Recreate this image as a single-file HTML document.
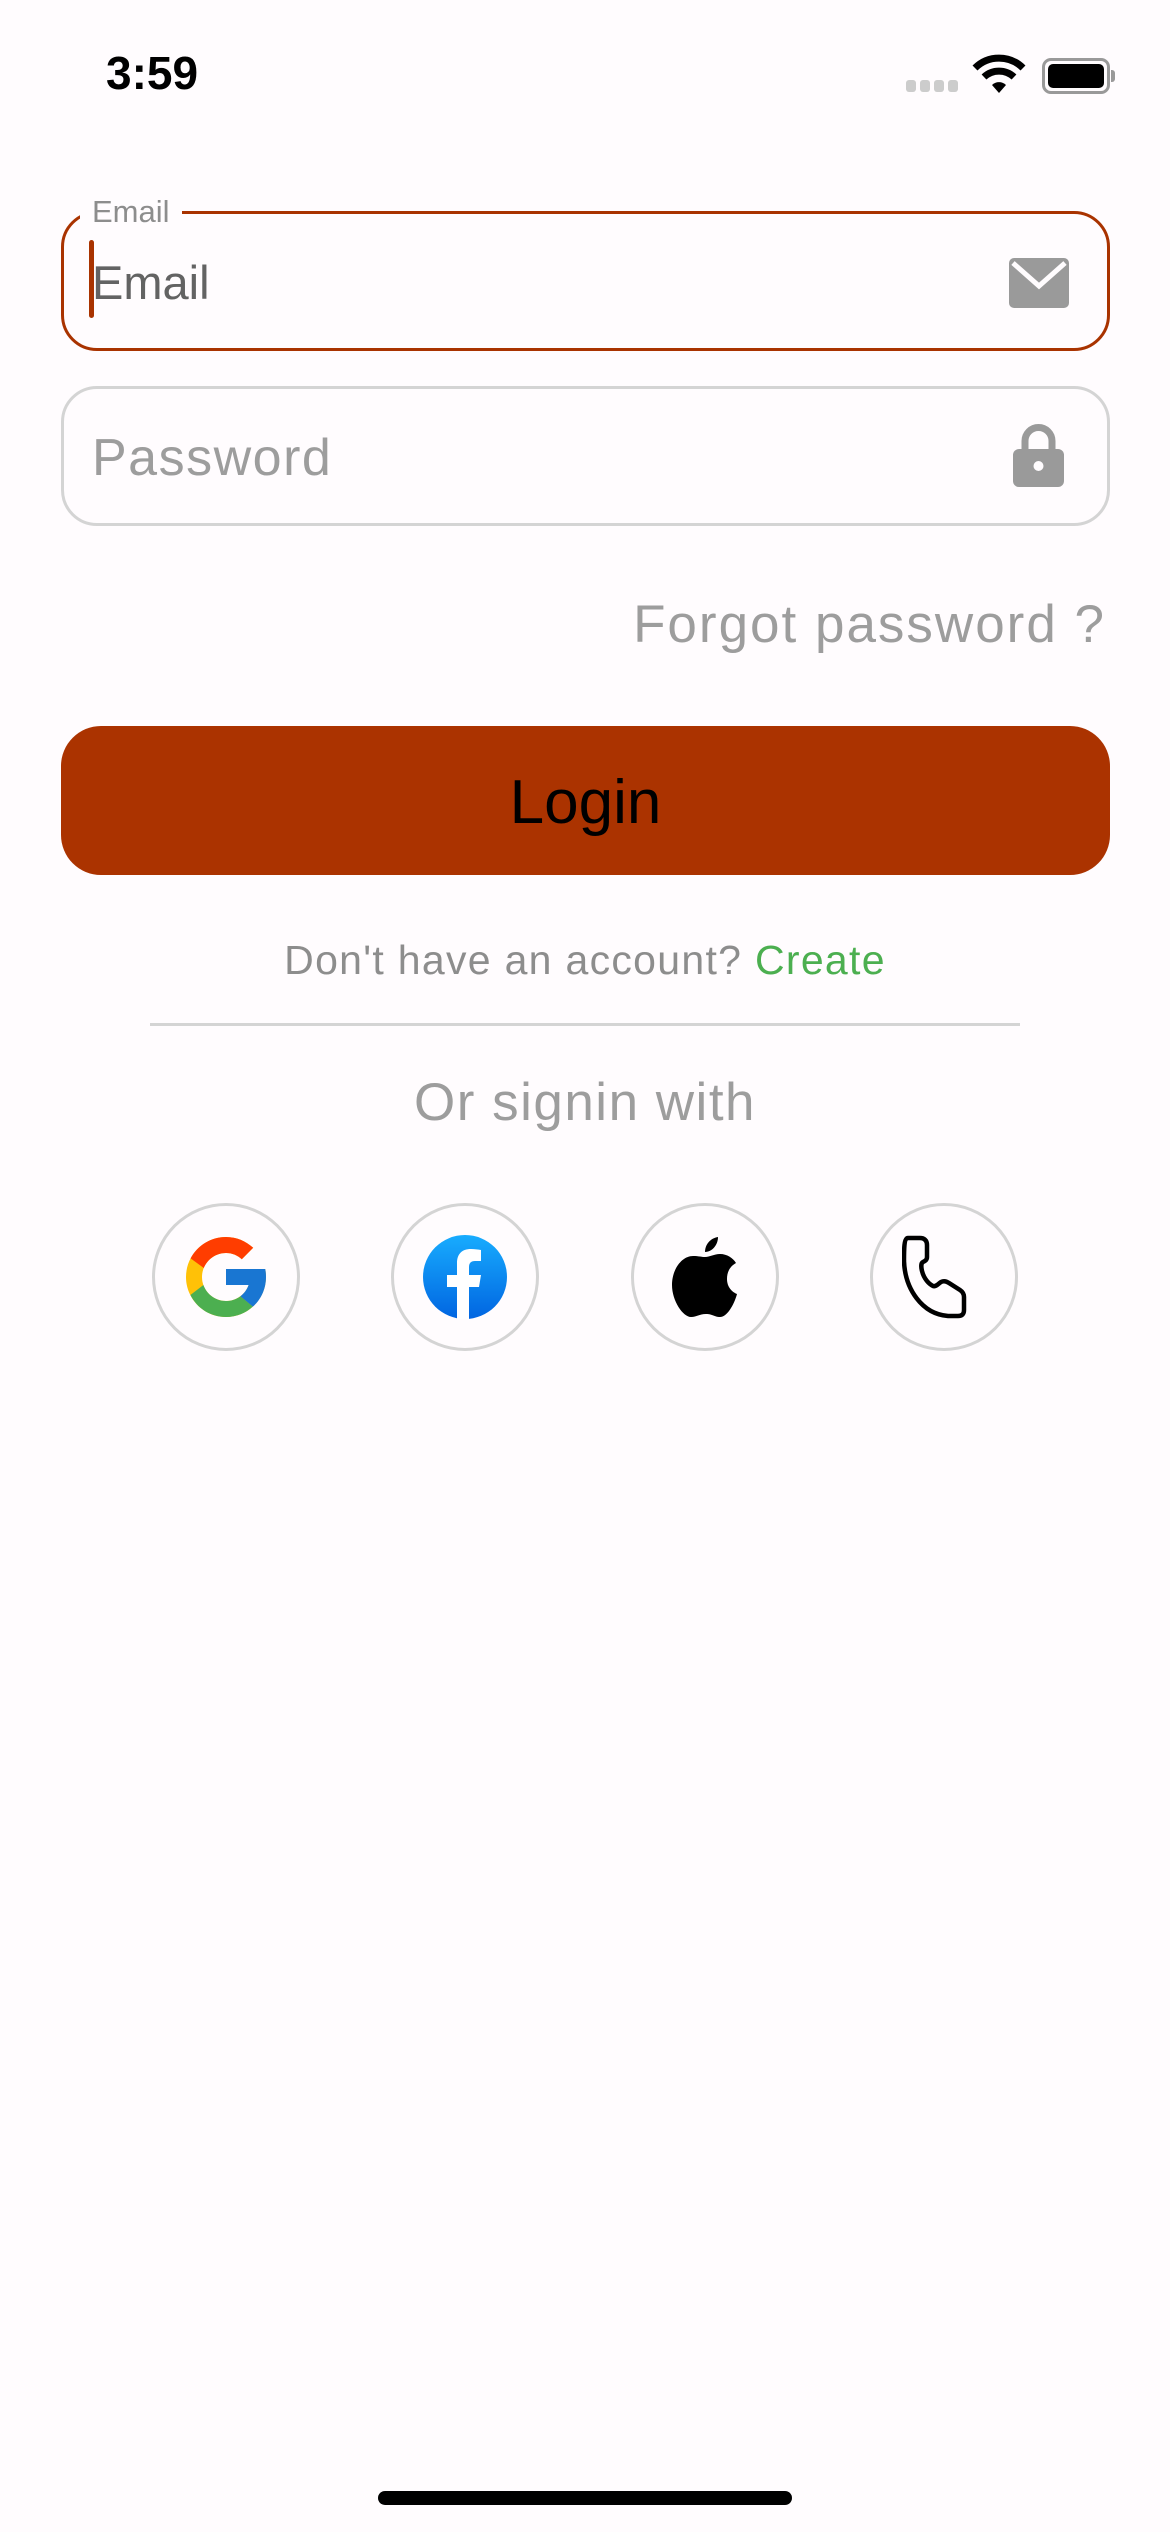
<!DOCTYPE html>
<html><head><meta charset="utf-8"><style>
*{margin:0;padding:0;box-sizing:border-box}
body{width:1170px;height:2532px;background:#fffcfe;font-family:"Liberation Sans",sans-serif;position:relative;overflow:hidden}
.a{position:absolute}
.field{position:absolute;left:61px;width:1049px;height:140px;border-radius:36px}
</style></head><body>
<div class="a" style="left:106px;top:46px;font-size:46px;font-weight:bold;color:#000">3:59</div>
<div class="a" style="left:906px;top:80px;width:52px;height:12px;display:flex;gap:4px">
<div style="flex:1;background:#ccc;border-radius:3px"></div><div style="flex:1;background:#ccc;border-radius:3px"></div><div style="flex:1;background:#ccc;border-radius:3px"></div><div style="flex:1;background:#ccc;border-radius:3px"></div></div>
<svg class="a" style="left:972px;top:54px" width="54" height="40" viewBox="0 0 54 40"><path d="M3 14 A34 34 0 0 1 51 14" stroke="#000" stroke-width="7" fill="none"/><path d="M12 23 A22 22 0 0 1 42 23" stroke="#000" stroke-width="7" fill="none"/><path d="M20 31 L27 39 L34 31 A10 10 0 0 0 20 31Z" fill="#000"/></svg>
<div class="a" style="left:1042px;top:58px;width:68px;height:36px;border:3px solid #999;border-radius:9px;padding:3px"><div style="width:100%;height:100%;background:#000;border-radius:5px"></div></div>
<div class="a" style="left:1111px;top:70px;width:4px;height:12px;background:#999;border-radius:0 3px 3px 0"></div>

<div class="field" style="top:211px;border:3px solid #a93300"></div>
<div class="a" style="left:80px;top:194px;padding:0 12px;background:#fffcfe;font-size:31px;color:#8d8d8d">Email</div>
<div class="a" style="left:89px;top:240px;width:5px;height:78px;background:#a93300;border-radius:3px"></div>
<div class="a" style="left:92px;top:255px;font-size:47px;color:#636363">Email</div>
<svg class="a" style="left:1009px;top:258px" width="60" height="50" viewBox="0 0 60 50"><rect width="60" height="50" rx="5" fill="#9a9a9a"/><path d="M4 5 L30 28 L56 5" stroke="#fffcfe" stroke-width="5" fill="none"/></svg>

<div class="field" style="top:386px;border:3px solid #d4d4d4"></div>
<div class="a" style="left:92px;top:428px;font-size:52px;color:#9d9d9d;letter-spacing:1.5px">Password</div>
<svg class="a" style="left:1013px;top:423px" width="51" height="64" viewBox="0 0 51 64"><path d="M12 28 V18 A13.5 13.5 0 0 1 39 18 V28" stroke="#9a9a9a" stroke-width="7" fill="none"/><rect x="0" y="26" width="51" height="38" rx="6" fill="#9a9a9a"/><circle cx="25.5" cy="43" r="5" fill="#fffcfe"/></svg>

<div class="a" style="right:64px;top:594px;font-size:53px;color:#9d9d9d;letter-spacing:2px">Forgot password ?</div>

<div class="a" style="left:61px;top:726px;width:1049px;height:149px;background:#ab3300;border-radius:40px;text-align:center;line-height:153px;font-size:62px;color:#000">Login</div>

<div class="a" style="left:0;width:1170px;top:937px;text-align:center;font-size:41px;color:#8d8d8d;letter-spacing:1.3px">Don't have an account? <span style="color:#4caf50">Create</span></div>
<div class="a" style="left:150px;top:1023px;width:870px;height:3px;background:#d4d4d4"></div>
<div class="a" style="left:0;width:1170px;top:1072px;text-align:center;font-size:53px;color:#9d9d9d;letter-spacing:1.5px">Or signin with</div>

<div class="a" style="left:152px;top:1203px;width:148px;height:148px;border:3px solid #d4d4d4;border-radius:50%"></div>
<div class="a" style="left:391px;top:1203px;width:148px;height:148px;border:3px solid #d4d4d4;border-radius:50%"></div>
<div class="a" style="left:631px;top:1203px;width:148px;height:148px;border:3px solid #d4d4d4;border-radius:50%"></div>
<div class="a" style="left:870px;top:1203px;width:148px;height:148px;border:3px solid #d4d4d4;border-radius:50%"></div>

<svg class="a" style="left:178px;top:1229px" width="96" height="96" viewBox="0 0 48 48"><path fill="#FFC107" d="M43.6 20H24v8h11.3C33.7 32.7 29.2 36 24 36c-6.6 0-12-5.4-12-12s5.4-12 12-12c3.1 0 5.8 1.2 7.9 3.1l5.7-5.7C34 6.1 29.3 4 24 4 13 4 4 13 4 24s9 20 20 20 20-9 20-20c0-1.3-.1-2.7-.4-4z"/><path fill="#FF3D00" d="M6.3 14.7l6.6 4.8C14.7 15.1 19 12 24 12c3.1 0 5.8 1.2 7.9 3.1l5.7-5.7C34 6.1 29.3 4 24 4 16.3 4 9.7 8.3 6.3 14.7z"/><path fill="#4CAF50" d="M24 44c5.200 0 9.9-2 13.4-5.2l-6.2-5.2C29.2 35.1 26.7 36 24 36c-5.2 0-9.6-3.3-11.3-8l-6.5 5C9.5 39.6 16.2 44 24 44z"/><path fill="#1976D2" d="M43.6 20H24v8h11.3c-.8 2.2-2.2 4.2-4.1 5.6l6.2 5.2C37 39.2 44 34 44 24c0-1.3-.1-2.7-.4-4z"/></svg>
<svg class="a" style="left:423px;top:1235px" width="84" height="84" viewBox="0 0 84 84"><defs><linearGradient id="fb" x1="0" y1="0" x2="0" y2="1"><stop offset="0" stop-color="#18acfe"/><stop offset="1" stop-color="#0165e1"/></linearGradient></defs><circle cx="42" cy="42" r="42" fill="url(#fb)"/><path d="M46 84 V52 H56 L58 40 H46 V32 C46 28 48 26 52 26 H58 V15 C55 14.5 52 14 48 14 C39 14 34 19 34 28 V40 H24 V52 H34 V84Z" fill="#fff"/></svg>
<svg class="a" style="left:672px;top:1235px" width="66" height="82" viewBox="0 0 66 82"><path d="M46 2 C46 10 40 17 33 17 C33 9 39 3 46 2Z" fill="#000"/><path d="M33 22 C38 22 42 19 48 19 C55 19 61 23 64 28 C57 32 55 38 55 44 C55 52 60 57 65 59 C62 70 55 82 48 82 C42 82 41 79 34 79 C27 79 25 82 19 82 C11 82 0 66 0 50 C0 34 10 21 21 21 C27 21 29 22 33 22Z" fill="#000"/></svg>
<svg class="a" style="left:902px;top:1235px" width="88" height="86" viewBox="0 0 88 86"><path d="M6 3 H18 C22 3 25 5 25 10 V22 C25 25 23 26 21 27 C19 28 19 32 20 36 C22 44 27 49 31 51 C34 52 36 49 39 47 C41 46 44 46 47 48 L58 55 C61 57 62 59 62 62 V75 C62 79 60 81 56 81 H46 C20 79 3 54 2 26 C2 14 2 3 6 3Z" stroke="#000" stroke-width="4.5" fill="none" stroke-linejoin="round"/></svg>

<div class="a" style="left:378px;top:2491px;width:414px;height:14px;background:#000;border-radius:7px"></div>
</body></html>
